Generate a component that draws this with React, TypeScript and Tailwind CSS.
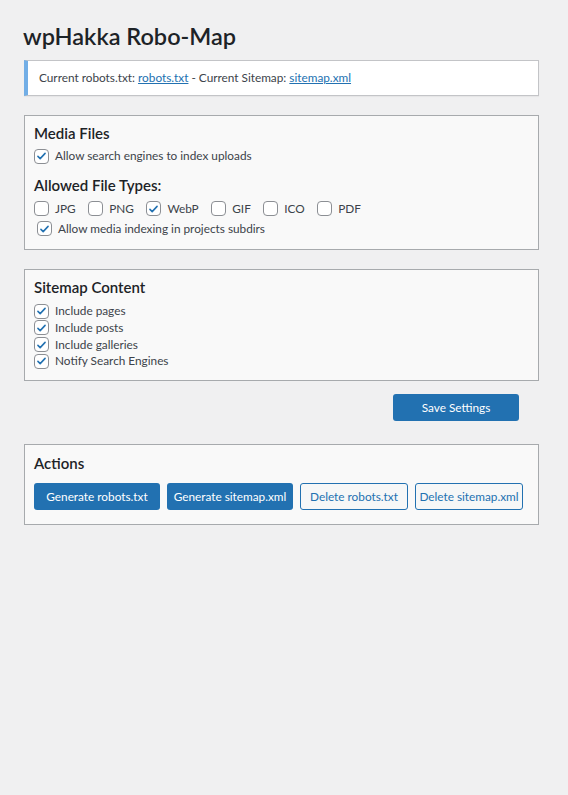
function Check({ checked }: { checked?: boolean }) {
  return (
    <span className="flex h-[15px] w-[15px] shrink-0 items-center justify-center rounded-[4px] border border-[#8c8f94] bg-white">
      {checked && (
        <svg viewBox="0 0 20 20" className="h-[14px] w-[14px]" aria-hidden="true">
          <path d="M4.5 10.5l3.5 3.5 7.5-8" fill="none" stroke="#2271b1" strokeWidth="2.4" strokeLinecap="round" strokeLinejoin="round" />
        </svg>
      )}
    </span>
  )
}

function Option({ label, checked, className = "" }: { label: string; checked?: boolean; className?: string }) {
  return (
    <label className={`flex h-[16.67px] items-center gap-[6px] ${className}`}>
      <Check checked={checked} />
      <span>{label}</span>
    </label>
  )
}

const fileTypes = [
  { label: "JPG", checked: false },
  { label: "PNG", checked: false },
  { label: "WebP", checked: true },
  { label: "GIF", checked: false },
  { label: "ICO", checked: false },
  { label: "PDF", checked: false },
]

export default function App() {
  return (
    <div
      className="min-h-[795px] bg-[#f0f0f1] px-[24px] pt-[20px] text-[11.8px] text-[#3c434a]"
      style={{ fontFamily: 'Lato, "Noto Sans", sans-serif' }}
    >
      <div className="w-[515px]">
        <h1 className="-ml-[1px] text-[23.5px] font-semibold leading-[32px] text-[#1d2327]">wpHakka Robo-Map</h1>

        <div className="mt-[8px] flex h-[36px] items-center border border-l-4 border-[#c3c4c7] border-l-[#72aee6] bg-white pl-[11px] shadow-[0_1px_1px_rgba(0,0,0,0.04)]">
          <p>
            Current robots.txt: <a href="#" className="text-[#2271b1] underline">robots.txt</a> - Current Sitemap:{" "}
            <a href="#" className="text-[#2271b1] underline">sitemap.xml</a>
          </p>
        </div>

        <section className="mt-[19px] h-[135px] border border-[#a7aaad] bg-[#f9f9f9] px-[9px] pt-[6px]">
          <h2 className="text-[15px] font-semibold leading-[22px] text-[#1d2327]">Media Files</h2>
          <Option className="mt-[4px]" label="Allow search engines to index uploads" checked />
          <h3 className="mt-[9px] text-[15px] font-semibold leading-[22px] text-[#1d2327]">Allowed File Types:</h3>
          <div className="mt-[5px] flex gap-[12.5px]">
            {fileTypes.map((t) => (
              <Option key={t.label} label={t.label} checked={t.checked} />
            ))}
          </div>
          <Option className="ml-[3px] mt-[3px]" label="Allow media indexing in projects subdirs" checked />
        </section>

        <section className="mt-[19px] h-[112px] border border-[#a7aaad] bg-[#f9f9f9] px-[9px] pt-[6px]">
          <h2 className="text-[15px] font-semibold leading-[22px] text-[#1d2327]">Sitemap Content</h2>
          <div className="mt-[5px] flex flex-col">
            <Option label="Include pages" checked />
            <Option label="Include posts" checked />
            <Option label="Include galleries" checked />
            <Option label="Notify Search Engines" checked />
          </div>
        </section>

        <div className="mt-[13px] flex justify-end pr-[20px]">
          <button className="h-[27px] w-[126px] rounded-[3px] bg-[#2271b1] text-white">Save Settings</button>
        </div>

        <section className="mt-[23px] h-[81px] border border-[#a7aaad] bg-[#f9f9f9] px-[9px] pt-[7px]">
          <h2 className="text-[15px] font-semibold leading-[22px] text-[#1d2327]">Actions</h2>
          <div className="mt-[9px] flex gap-[7px] whitespace-nowrap">
            <button className="h-[27px] w-[126px] rounded-[3px] bg-[#2271b1] text-white">Generate robots.txt</button>
            <button className="h-[27px] w-[126px] rounded-[3px] bg-[#2271b1] text-white">Generate sitemap.xml</button>
            <button className="h-[27px] w-[108px] rounded-[3px] border border-[#2271b1] bg-[#f6f7f7] text-[#2271b1]">Delete robots.txt</button>
            <button className="h-[27px] w-[108px] rounded-[3px] border border-[#2271b1] bg-[#f6f7f7] text-[#2271b1]">Delete sitemap.xml</button>
          </div>
        </section>
      </div>
    </div>
  )
}
